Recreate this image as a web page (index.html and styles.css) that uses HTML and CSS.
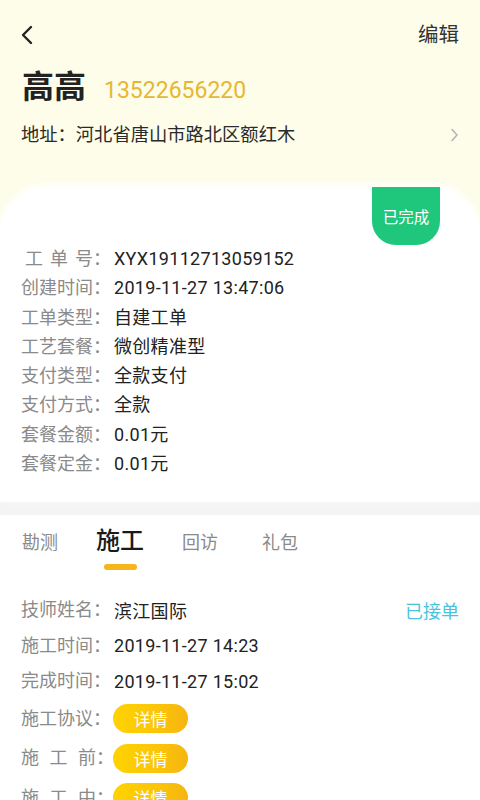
FILE: index.html
```html
<!DOCTYPE html>
<html lang="zh-CN">
<head>
<meta charset="utf-8">
<title>工单详情</title>
<link rel="stylesheet" href="styles.css">
</head>
<body>
<div class="page">
  <header class="header">
    <div class="nav">
      <svg class="back" width="14" height="20" viewBox="0 0 14 20"><path d="M11 2 L3 10 L11 18" fill="none" stroke="#222" stroke-width="2.4" stroke-linecap="round" stroke-linejoin="round"/></svg>
      <span class="edit">编辑</span>
    </div>
    <div class="name-row">
      <span class="name">高高</span>
      <span class="phone">13522656220</span>
    </div>
    <div class="addr-row">
      <span class="addr">地址：河北省唐山市路北区额红木</span>
      <svg class="chev" width="9" height="14" viewBox="0 0 9 14"><path d="M2 1.5 L7 7 L2 12.5" fill="none" stroke="#b5b5b5" stroke-width="1.6" stroke-linecap="round" stroke-linejoin="round"/></svg>
    </div>
  </header>

  <section class="card">
    <div class="badge">已完成</div>
    <div class="row"><span class="label"><span class="jl jl-indent">工单号</span>：</span><span class="val">XYX19112713059152</span></div>
    <div class="row"><span class="label">创建时间：</span><span class="val">2019-11-27 13:47:06</span></div>
    <div class="row"><span class="label">工单类型：</span><span class="val">自建工单</span></div>
    <div class="row"><span class="label">工艺套餐：</span><span class="val">微创精准型</span></div>
    <div class="row"><span class="label">支付类型：</span><span class="val">全款支付</span></div>
    <div class="row"><span class="label">支付方式：</span><span class="val">全款</span></div>
    <div class="row"><span class="label">套餐金额：</span><span class="val">0.01元</span></div>
    <div class="row"><span class="label">套餐定金：</span><span class="val">0.01元</span></div>
  </section>

  <div class="band"></div>

  <section class="detail">
    <nav class="tabs">
      <div class="tab"><span class="tab-label">勘测</span></div>
      <div class="tab active"><span class="tab-label">施工</span><span class="bar"></span></div>
      <div class="tab"><span class="tab-label">回访</span></div>
      <div class="tab"><span class="tab-label">礼包</span></div>
    </nav>
    <div class="rows">
      <div class="drow"><span class="label">技师姓名：</span><span class="val">滨江国际</span><span class="status">已接单</span></div>
      <div class="drow"><span class="label">施工时间：</span><span class="val">2019-11-27 14:23</span></div>
      <div class="drow"><span class="label">完成时间：</span><span class="val">2019-11-27 15:02</span></div>
      <div class="drow btnrow"><span class="label">施工协议：</span><span class="btn">详情</span></div>
      <div class="drow btnrow"><span class="label"><span class="jl">施工前</span>：</span><span class="btn">详情</span></div>
      <div class="drow btnrow"><span class="label"><span class="jl">施工中</span>：</span><span class="btn">详情</span></div>
      <div class="drow btnrow"><span class="label"><span class="jl">施工后</span>：</span><span class="btn">详情</span></div>
    </div>
  </section>
</div>
</body>
</html>
```

FILE: styles.css
```css
* { box-sizing: border-box; }
html, body { margin: 0; padding: 0; }
body {
  font-family: Roboto, "Noto Sans CJK SC", sans-serif;
  background: #ffffff;
  color: #222;
}
.page {
  width: 480px;
  background: #fdfde9;
  overflow: hidden;
}
.header {
  padding: 14px 21px 37px 20px;
}
.nav {
  height: 42px;
  display: flex;
  align-items: center;
  justify-content: space-between;
}
.back { display: block; margin-left: 0; }
.edit {
  font-size: 20.5px;
  color: #333;
  line-height: 42px;
}
.name-row {
  margin-top: 11px;
  display: flex;
  align-items: baseline;
  line-height: 40px;
  padding-left: 2px;
}
.name {
  font-size: 32px;
  font-weight: 700;
  color: #222;
}
.phone {
  margin-left: 18px;
  font-size: 23px;
  color: #e6b733;
}
.addr-row {
  margin-top: 9px;
  display: flex;
  align-items: center;
  justify-content: space-between;
  line-height: 30px;
  padding-left: 1px;
}
.addr { font-size: 18.3px; color: #2a2a2a; }
.chev { display: block; }

.card {
  position: relative;
  background: #fff;
  border-radius: 46px 46px 0 0;
  box-shadow: 0 -3px 12px rgba(255, 255, 255, 0.9);
  padding: 57px 21px 24px;
}
.badge {
  position: absolute;
  top: 0;
  right: 40px;
  width: 68px;
  height: 58px;
  background: #1fc77c;
  border-radius: 0 0 24px 24px;
  color: #fff;
  font-size: 15.5px;
  display: flex;
  align-items: center;
  justify-content: center;
}
.row {
  display: flex;
  line-height: 29.3px;
  font-size: 18px;
}
.label {
  width: 93px;
  flex: none;
  color: #8a8a8a;
  display: flex;
}
.jl {
  display: inline-block;
  width: 76px;
  text-align: justify;
  text-align-last: justify;
}
.jl-indent { width: 68px; margin-left: 4px; }
.val { color: #222; letter-spacing: 0.3px; }

.band {
  height: 13px;
  background: #f4f4f4;
}

.detail {
  background: #fff;
  padding-bottom: 20px;
}
.tabs {
  display: flex;
  align-items: baseline;
  padding-top: 11px;
}
.tab {
  width: 80px;
  display: flex;
  flex-direction: column;
  align-items: center;
}
.tab-label {
  font-size: 18px;
  line-height: 30px;
  color: #8a8a8a;
}
.tab.active .tab-label {
  font-size: 24px;
  color: #1a1a1a;
  font-weight: 500;
}
.bar {
  margin-top: 8px;
  width: 33px;
  height: 6px;
  border-radius: 3px;
  background: #f5b51b;
}
.rows {
  padding: 22px 21px 0;
}
.drow {
  display: flex;
  align-items: center;
  height: 35.5px;
  font-size: 18px;
}
.drow .label { line-height: 30px; }
.btnrow { height: 39.5px; }
.status {
  margin-left: auto;
  color: #4bc2dc;
}
.btn {
  width: 75px;
  height: 29px;
  border-radius: 15px;
  background: linear-gradient(90deg, #ffd300 0%, #fbc40a 60%, #f5b50f 100%);
  color: #fff;
  font-size: 17px;
  display: flex;
  align-items: center;
  justify-content: center;
  margin-left: -1px;
}
```
